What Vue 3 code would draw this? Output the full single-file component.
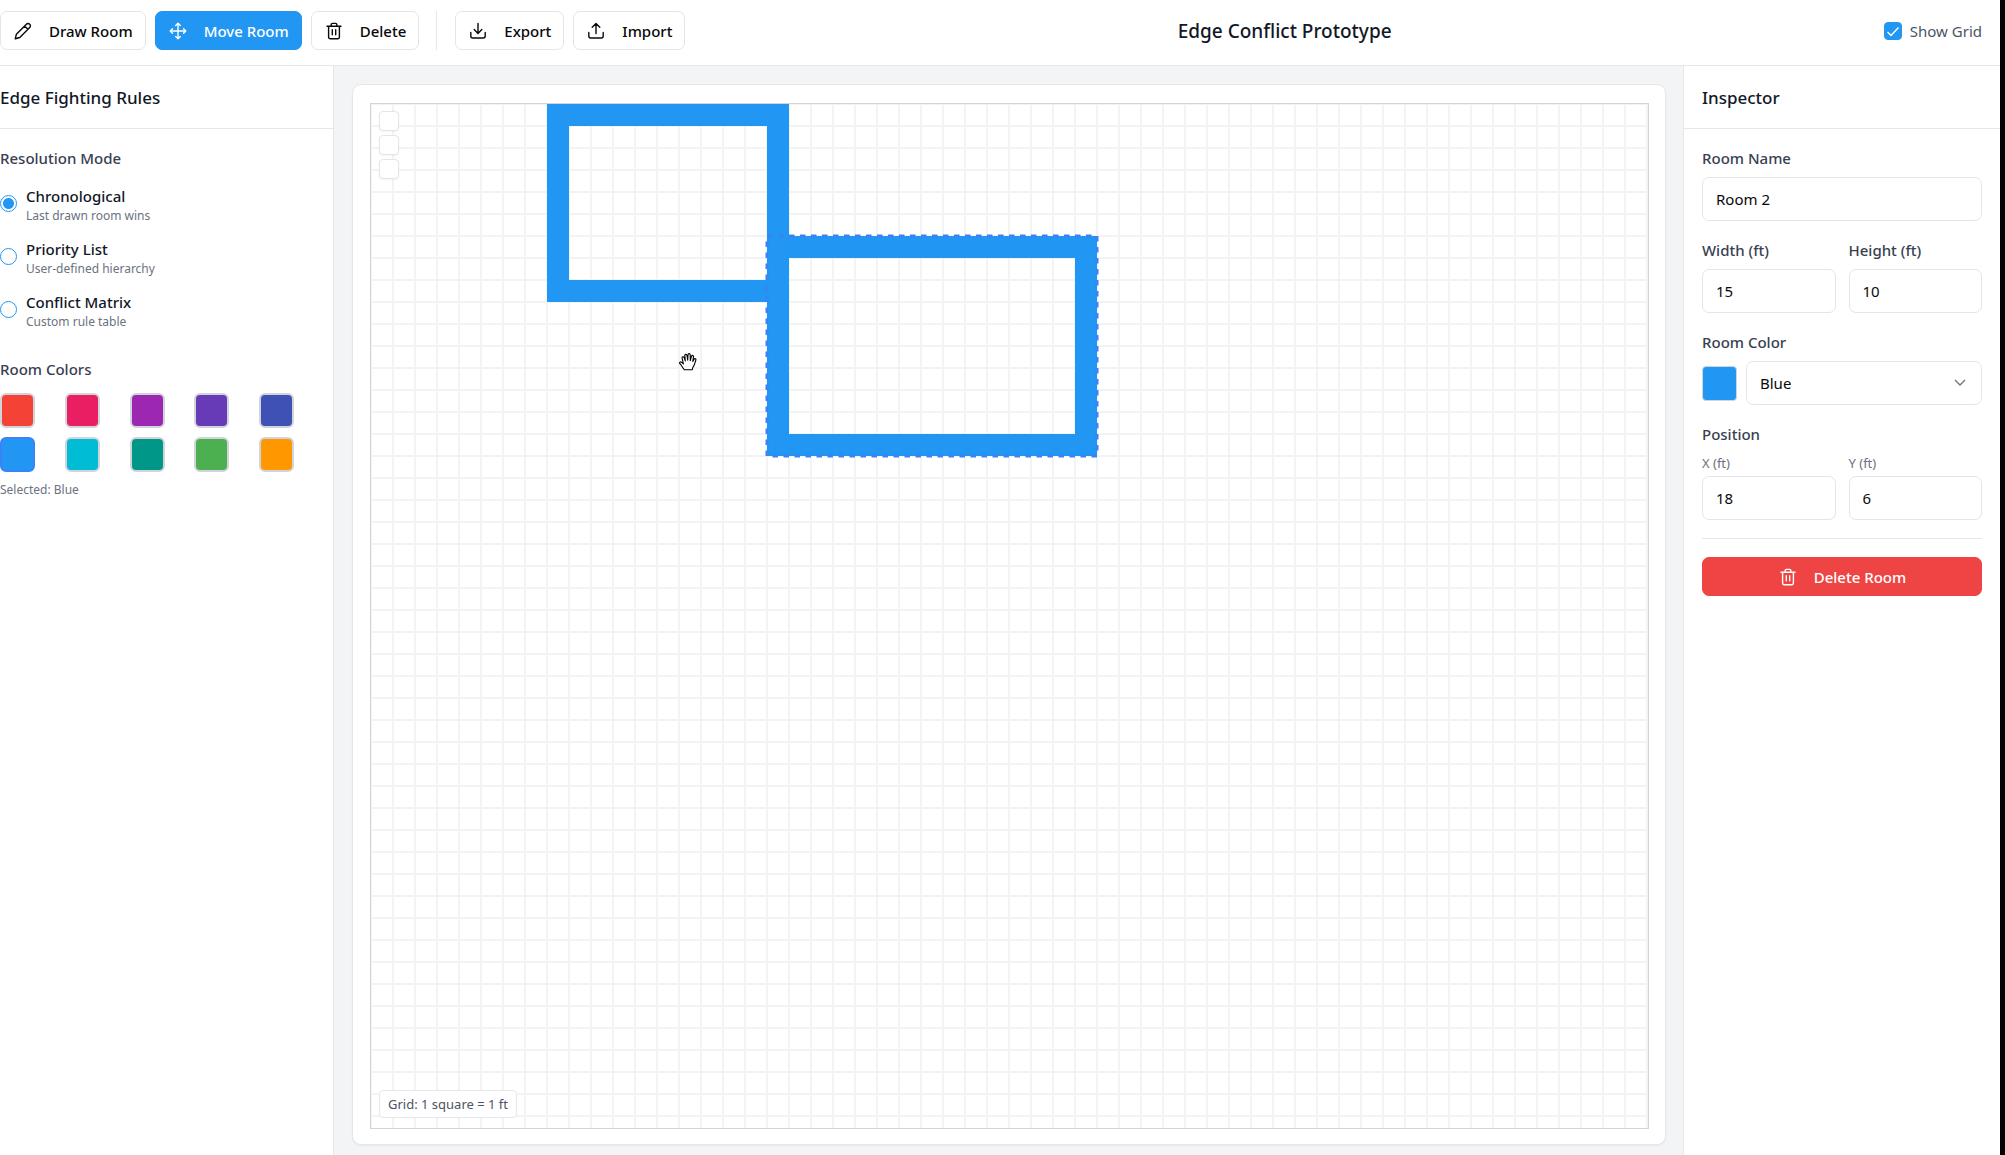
<script setup>
import { ref, computed } from 'vue'

const CELL = 22

const mode = ref('chronological')
const modes = [
  { id: 'chronological', title: 'Chronological', note: 'Last drawn room wins' },
  { id: 'priority', title: 'Priority List', note: 'User-defined hierarchy' },
  { id: 'matrix', title: 'Conflict Matrix', note: 'Custom rule table' },
]

const colors = [
  { name: 'Red', value: '#f44336' },
  { name: 'Pink', value: '#e91e63' },
  { name: 'Purple', value: '#9c27b0' },
  { name: 'Deep Purple', value: '#673ab7' },
  { name: 'Indigo', value: '#3f51b5' },
  { name: 'Blue', value: '#2196f3' },
  { name: 'Cyan', value: '#00bcd4' },
  { name: 'Teal', value: '#009688' },
  { name: 'Green', value: '#4caf50' },
  { name: 'Orange', value: '#ff9800' },
]
const paint = ref('Blue')

const showGrid = ref(true)
const rooms = ref([
  { name: 'Room 1', x: 8, y: 0, width: 11, height: 9, color: 'Blue' },
  { name: 'Room 2', x: 18, y: 6, width: 15, height: 10, color: 'Blue' },
])
const selected = computed(() => rooms.value[1])

const hex = (name) => colors.find((c) => c.name === name).value

function wallPath(r) {
  const x = r.x * CELL
  const y = r.y * CELL
  const w = r.width * CELL
  const h = r.height * CELL
  return (
    `M${x} ${y}h${w}v${h}h${-w}z` +
    `M${x + CELL} ${y + CELL}v${h - 2 * CELL}h${w - 2 * CELL}v${2 * CELL - h}z`
  )
}
</script>

<template>
  <div class="app">
    <header class="toolbar">
      <div class="tools">
        <button type="button" class="btn">
          <svg class="icon" viewBox="0 0 18 18" aria-hidden="true">
            <path d="M1.3 16.7 2.4 12.2 12.4 2.2a2.3 2.3 0 0 1 3.3 3.3L5.8 15.5zM10.6 4l3.3 3.3" />
          </svg>
          Draw Room
        </button>
        <button type="button" class="btn active">
          <svg class="icon" viewBox="0 0 18 18" aria-hidden="true">
            <path d="M9 1.2v15.6M1.2 9h15.6M6.7 3.5 9 1.2l2.3 2.3M6.7 14.5 9 16.8l2.3-2.3M3.5 6.7 1.2 9l2.3 2.3M14.5 6.7 16.8 9l-2.3 2.3" />
          </svg>
          Move Room
        </button>
        <button type="button" class="btn">
          <svg class="icon" viewBox="0 0 18 18" aria-hidden="true">
            <path d="M2 4.2h14M3.6 4.2v10.9a1.6 1.6 0 0 0 1.6 1.6h7.6a1.6 1.6 0 0 0 1.6-1.6V4.2M6.2 4.2V2.6a1.2 1.2 0 0 1 1.2-1.2h3.2a1.2 1.2 0 0 1 1.2 1.2v1.6M7.3 7.8v5M10.7 7.8v5" />
          </svg>
          Delete
        </button>
        <span class="rule"></span>
        <button type="button" class="btn">
          <svg class="icon" viewBox="0 0 18 18" aria-hidden="true">
            <path d="M9 1.5v9.8M5.2 7.6 9 11.4l3.8-3.8M1.8 10.5v3.6a1.9 1.9 0 0 0 1.9 1.9h10.6a1.9 1.9 0 0 0 1.9-1.9v-3.6" />
          </svg>
          Export
        </button>
        <button type="button" class="btn">
          <svg class="icon" viewBox="0 0 18 18" aria-hidden="true">
            <path d="M9 11.5V1.6M5.2 5.3 9 1.5l3.8 3.8M1.8 10.5v3.6a1.9 1.9 0 0 0 1.9 1.9h10.6a1.9 1.9 0 0 0 1.9-1.9v-3.6" />
          </svg>
          Import
        </button>
      </div>
      <h1>Edge Conflict Prototype</h1>
      <label class="grid-toggle">
        <span class="check">
          <input v-model="showGrid" type="checkbox" />
          <svg v-if="showGrid" viewBox="0 0 18 18" aria-hidden="true"><path d="m3.5 10 3.5 3.5 7.500-8" /></svg>
        </span>
        Show Grid
      </label>
    </header>

    <div class="body">
      <aside class="rules">
        <h2>Edge Fighting Rules</h2>
        <section class="rules-body">
          <h3>Resolution Mode</h3>
          <div class="modes">
            <label v-for="m in modes" :key="m.id" class="mode">
              <input v-model="mode" type="radio" name="mode" :value="m.id" />
              <span class="mode-text">
                <span class="mode-title">{{ m.title }}</span>
                <span class="note">{{ m.note }}</span>
              </span>
            </label>
          </div>
          <h3>Room Colors</h3>
          <div class="palette">
            <button
              v-for="c in colors"
              :key="c.name"
              type="button"
              class="swatch"
              :class="{ chosen: c.name === paint }"
              :style="{ backgroundColor: c.value }"
              :aria-label="c.name"
              @click="paint = c.name"
            ></button>
          </div>
          <p class="note">Selected: {{ paint }}</p>
        </section>
      </aside>

      <main class="stage">
        <div class="card">
          <div class="canvas">
            <svg class="plan" aria-label="Floor plan">
              <defs>
                <pattern id="grid" :width="CELL" :height="CELL" patternUnits="userSpaceOnUse">
                  <path d="M0 0H22V22H0ZM1 1V21H21V1Z" fill="#f2f3f5" fill-rule="evenodd" />
                </pattern>
              </defs>
              <rect v-if="showGrid" width="100%" height="100%" fill="url(#grid)" />
              <path v-for="r in rooms" :key="r.name" :d="wallPath(r)" :fill="hex(r.color)" fill-rule="evenodd" />
              <rect
                class="outline"
                :x="selected.x * CELL"
                :y="selected.y * CELL"
                :width="selected.width * CELL"
                :height="selected.height * CELL"
              />
            </svg>
            <div class="zoom">
              <button type="button" aria-label="Zoom in"></button>
              <button type="button" aria-label="Zoom out"></button>
              <button type="button" aria-label="Reset view"></button>
            </div>
            <svg class="hand" viewBox="0 0 18 18" aria-hidden="true">
              <path d="M5.200 16.800 2.200 12.200.7 10.400c-.6-1 .8-1.900 1.700-1.200l2 1.700-1.300-5.700c-.3-1.500 1.500-2 2-.6l1.200 3.300L5.800 2.600c-.1-1.600 1.900-1.700 2.200-.2l.7 4.800.3-5.500c.1-1.500 2.100-1.400 2.200.1l.1 5.700 1.200-4.300c.5-1.400 2.200-.9 2 .6l-.7 4.600 1.200-2.100c.7-1.300 2.300-.5 1.800.9l-1.700 5.100-1.400 2.400-.5 2.100z" />
            </svg>
            <div class="legend">Grid: 1 square = 1 ft</div>
          </div>
        </div>
      </main>

      <aside class="inspector">
        <h2>Inspector</h2>
        <form class="form" @submit.prevent>
          <div class="field">
            <label for="room-name">Room Name</label>
            <input id="room-name" v-model="selected.name" class="box" type="text" />
          </div>
          <div class="pair">
            <div class="field">
              <label for="room-width">Width (ft)</label>
              <input id="room-width" v-model.number="selected.width" class="box" type="text" inputmode="numeric" />
            </div>
            <div class="field">
              <label for="room-height">Height (ft)</label>
              <input id="room-height" v-model.number="selected.height" class="box" type="text" inputmode="numeric" />
            </div>
          </div>
          <div class="field">
            <label for="room-color">Room Color</label>
            <div class="color-row">
              <span class="sample" :style="{ backgroundColor: hex(selected.color) }"></span>
              <span class="select">
                <select id="room-color" v-model="selected.color" class="box">
                  <option v-for="c in colors" :key="c.name">{{ c.name }}</option>
                </select>
                <svg viewBox="0 0 12 12" aria-hidden="true"><path d="m1 3 5 5 5-5" /></svg>
              </span>
            </div>
          </div>
          <div class="field position">
            <h3>Position</h3>
            <div class="pair">
              <div class="field small">
                <label for="room-x">X (ft)</label>
                <input id="room-x" v-model.number="selected.x" class="box" type="text" inputmode="numeric" />
              </div>
              <div class="field small">
                <label for="room-y">Y (ft)</label>
                <input id="room-y" v-model.number="selected.y" class="box" type="text" inputmode="numeric" />
              </div>
            </div>
          </div>
        </form>
        <div class="danger-zone">
          <button type="button" class="btn danger">
            <svg class="icon" viewBox="0 0 18 18" aria-hidden="true">
              <path d="M2 4.2h14M3.6 4.2v10.9a1.6 1.6 0 0 0 1.6 1.6h7.6a1.6 1.6 0 0 0 1.6-1.6V4.2M6.2 4.2V2.6a1.2 1.2 0 0 1 1.2-1.2h3.2a1.2 1.2 0 0 1 1.2 1.2v1.6M7.3 7.8v5M10.7 7.8v5" />
            </svg>
            Delete Room
          </button>
        </div>
      </aside>
    </div>
  </div>
</template>

<style>
body {
  margin: 0;
  background: #fff;
}
</style>

<style scoped>
* {
  box-sizing: border-box;
}
.app {
  display: flex;
  flex-direction: column;
  min-height: 100vh;
  border-right: 5px solid #000;
  background: #fff;
  color: #111827;
  font-family: 'Noto Sans', 'Open Sans', sans-serif;
  font-size: 15px;
  line-height: 22px;
}
h1,
h2,
h3,
p {
  margin: 0;
  font-weight: 500;
}
button,
input,
select {
  margin: 0;
  font: inherit;
}

.toolbar {
  display: flex;
  align-items: flex-start;
  justify-content: space-between;
  height: 66px;
  padding: 11px 18px 0 0;
  border-bottom: 1px solid #e5e7eb;
}
.tools {
  display: flex;
  gap: 9px;
}
.btn {
  display: flex;
  align-items: center;
  justify-content: center;
  gap: 17px;
  height: 39px;
  padding: 0 12px 0 13px;
  border: 1px solid #e5e5e7;
  border-radius: 7px;
  background: #fff;
  color: #09090b;
  font-weight: 500;
}
.btn.active {
  border-color: #2196f3;
  background: #2196f3;
  color: #fff;
}
.icon {
  width: 18px;
  height: 18px;
  fill: none;
  stroke: currentColor;
  stroke-width: 1.4;
  stroke-linecap: round;
  stroke-linejoin: round;
}
.rule {
  width: 1px;
  margin: 0 9px 0 8px;
  background: #e5e7eb;
}
h1 {
  line-height: 40px;
  font-size: 19px;
}
.grid-toggle {
  display: flex;
  align-items: center;
  gap: 8px;
  height: 39px;
  color: #4b5563;
}
.check {
  position: relative;
  display: flex;
}
.check input {
  width: 18px;
  height: 18px;
  appearance: none;
  border: 1px solid #2196f3;
  border-radius: 4px;
}
.check input:checked {
  background: #2196f3;
}
.check svg {
  position: absolute;
  inset: 0;
  fill: none;
  stroke: #fff;
  stroke-width: 1.4;
  pointer-events: none;
}

.body {
  flex: 1;
  display: flex;
}
h2 {
  padding: 21px 18px 19px;
  border-bottom: 1px solid #e5e7eb;
  font-size: 17px;
}
h3,
.field label {
  color: #374151;
  font-size: 15px;
  font-weight: 500;
}
.rules {
  flex: none;
  width: 334px;
  border-right: 1px solid #e5e7eb;
}
.rules h2 {
  padding-left: 0;
}
.rules-body {
  padding: 18px 18px 18px 0;
}
.modes {
  display: flex;
  flex-direction: column;
  gap: 13px;
  margin: 16px 0 27px;
}
.mode {
  display: flex;
  gap: 9px;
}
.mode input {
  flex: none;
  width: 17px;
  height: 17px;
  margin-top: 10px;
  appearance: none;
  border: 1px solid #2196f3;
  border-radius: 50%;
}
.mode input:checked {
  background: radial-gradient(circle, #2196f3 5px, transparent 6px);
}
.mode-text {
  display: flex;
  flex-direction: column;
}
.mode-title {
  font-weight: 500;
}
.note {
  color: #6b7280;
  font-size: 12px;
  line-height: 18px;
  font-weight: 400;
}
.palette {
  display: grid;
  grid-template-columns: repeat(5, 1fr);
  gap: 9px;
  margin: 13px 0 9px;
}
.swatch {
  width: 35px;
  height: 35px;
  padding: 0;
  border: 2px solid #d1d5db;
  border-radius: 6px;
}
.swatch.chosen {
  border-color: #3b82f6;
}

.stage {
  flex: 1;
  display: flex;
  min-width: 0;
  padding: 18px 17px 10px 18px;
  background: #f3f4f6;
}
.card {
  flex: 1;
  display: flex;
  min-width: 0;
  padding: 18px 16px 15px 17px;
  border: 1px solid #e5e7eb;
  border-radius: 9px;
  background: #fff;
  box-shadow: 0 1px 2px rgba(0, 0, 0, 0.05);
}
.canvas {
  position: relative;
  flex: 1;
  border: 1px solid #d1d5db;
}
.plan {
  position: absolute;
  inset: 0;
  width: 100%;
  height: 100%;
}
.outline {
  fill: none;
  stroke: #3b82f6;
  stroke-width: 3;
  stroke-dasharray: 5.5 5.5;
}
.zoom {
  position: absolute;
  top: 7px;
  left: 8px;
  display: flex;
  flex-direction: column;
  gap: 4px;
}
.zoom button {
  width: 20px;
  height: 20px;
  padding: 0;
  border: 1px solid #e5e5e7;
  border-radius: 4px;
  background: #fff;
  box-shadow: 0 1px 2px rgba(0, 0, 0, 0.05);
}
.hand {
  position: absolute;
  top: 249px;
  left: 308px;
  width: 18px;
  height: 18px;
  fill: #fff;
  stroke: #000;
  stroke-width: 1.1;
  stroke-linejoin: round;
}
.legend {
  position: absolute;
  bottom: 10px;
  left: 8px;
  padding: 4px 8px;
  border: 1px solid #e5e7eb;
  border-radius: 4px;
  background: #fff;
  color: #4b5563;
  font-size: 13px;
  line-height: 18px;
}

.inspector {
  flex: none;
  width: 317px;
  border-left: 1px solid #e5e7eb;
}
.form {
  display: flex;
  flex-direction: column;
  gap: 18px;
  padding: 18px 18px 0;
}
.field {
  display: flex;
  flex-direction: column;
  gap: 8px;
  min-width: 0;
}
.position {
  gap: 9px;
}
.small {
  gap: 4px;
}
.small label {
  color: #6b7280;
  font-size: 13px;
  line-height: 18px;
  font-weight: 400;
}
.pair {
  display: grid;
  grid-template-columns: 1fr 1fr;
  gap: 13px;
}
.box {
  width: 100%;
  height: 44px;
  padding: 0 13px;
  border: 1px solid #e5e5e7;
  border-radius: 7px;
  background: #fff;
  color: #09090b;
}
.color-row {
  display: flex;
  align-items: center;
  gap: 9px;
}
.sample {
  flex: none;
  width: 35px;
  height: 35px;
  border: 1px solid #d1d5db;
  border-radius: 4px;
}
.select {
  position: relative;
  flex: 1;
  display: flex;
}
.select select {
  appearance: none;
}
.select svg {
  position: absolute;
  top: 16px;
  right: 16px;
  width: 12px;
  height: 12px;
  fill: none;
  stroke: #71717a;
  stroke-width: 1.3;
  pointer-events: none;
}
.danger-zone {
  margin: 18px;
  padding-top: 18px;
  border-top: 1px solid #e5e7eb;
}
.danger {
  width: 100%;
  border-color: #ef4444;
  background: #ef4444;
  color: #fff;
}
</style>
